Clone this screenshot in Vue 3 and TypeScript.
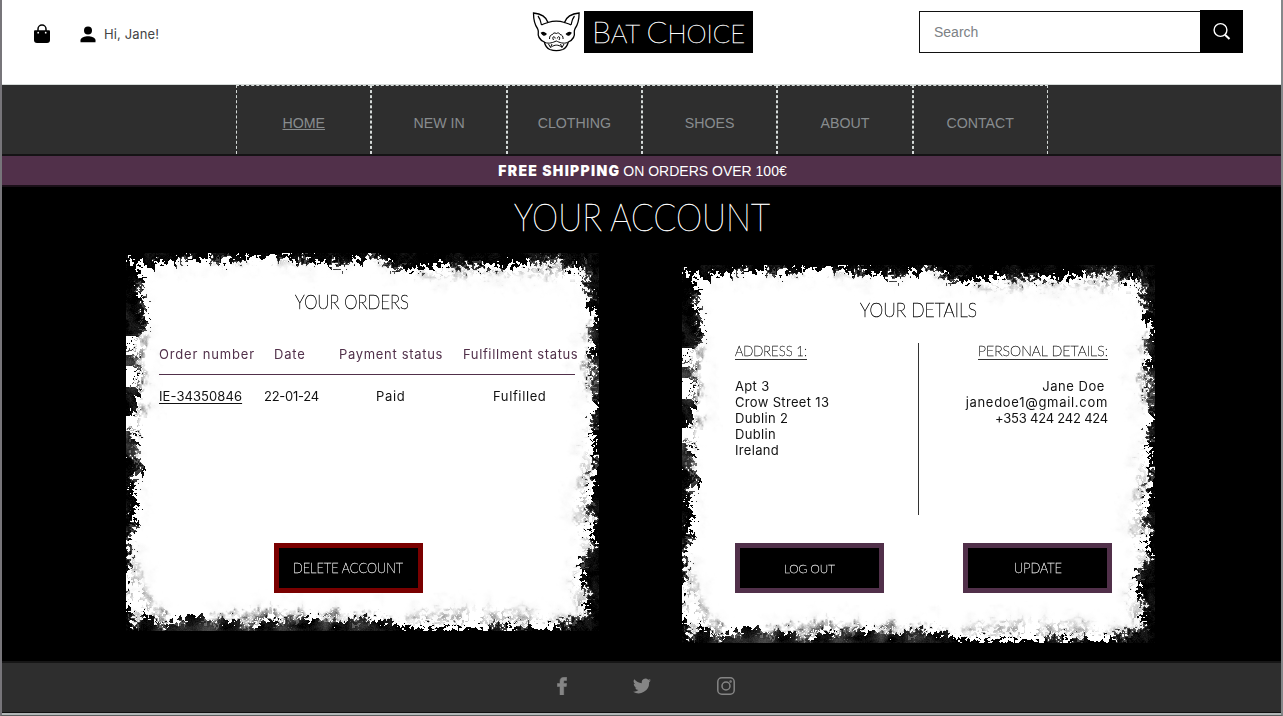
<script setup lang="ts">
import { onMounted, ref } from 'vue'

const links = ['HOME', 'NEW IN', 'CLOTHING', 'SHOES', 'ABOUT', 'CONTACT']
const address = ['Apt 3', 'Crow Street 13', 'Dublin 2', 'Dublin', 'Ireland']

const ordersPaper = ref<HTMLCanvasElement | null>(null)
const detailsPaper = ref<HTMLCanvasElement | null>(null)

const W = 473
const H = 378

// Depth of the ink along each side of the paper, as [position, depth] stops.
type Profile = [number, number][]
const topInk: Profile = [[0, 3], [10, 11], [20, 15], [27, 11], [40, 8], [60, 8], [85, 7], [110, 6], [135, 4], [160, 4], [172, 8], [200, 11], [215, 12], [228, 6], [248, 5], [258, 8], [270, 18], [285, 16], [300, 14], [318, 14], [330, 12], [345, 15], [375, 14], [390, 12], [405, 9], [432, 7], [442, 17], [450, 14], [458, 13], [466, 24], [473, 30]]
const rightInk: Profile = [[0, 24], [12, 11], [30, 13], [45, 8], [54, 11], [62, 2], [75, 8], [92, 9], [110, 8], [140, 6], [155, 4], [165, 8], [180, 5], [195, 7], [212, 6], [238, 7], [256, 9], [265, 3], [273, 9], [285, 9], [294, 4], [303, 15], [318, 17], [330, 18], [340, 10], [352, 12], [362, 7], [370, 20], [378, 30]]
const bottomInk: Profile = [[0, 12], [8, 8], [12, 6], [17, 17], [26, 13], [36, 3], [45, 10], [62, 14], [76, 15], [86, 8], [110, 9], [120, 4], [130, 8], [142, 10], [160, 11], [180, 11], [195, 14], [210, 9], [240, 13], [258, 10], [268, 7], [276, 3], [300, 1], [315, 3], [345, 3], [360, 1], [370, 5], [400, 3], [412, 1], [425, 5], [440, 8], [450, 11], [460, 14], [473, 22]]
const leftInk: Profile = [[0, 1], [8, 4], [16, 14], [25, 18], [35, 13], [47, 17], [58, 19], [70, 19], [80, 17], [86, 8], [100, 8], [112, 13], [130, 9], [148, 13], [160, 7], [168, 2], [176, 5], [190, 12], [203, 8], [212, 15], [218, 16], [224, 8], [236, 7], [250, 10], [265, 10], [275, 7], [286, 2], [300, 3], [312, 1], [345, -2], [358, 5], [378, 10]]
// Depth of the smoky shading just inside the ink.
const leftSmoke: Profile = [[0, 20], [30, 16], [70, 19], [90, 21], [150, 20], [185, 18], [200, 10], [300, 8], [325, 17], [345, 28], [365, 20], [378, 12]]
const rightSmoke: Profile = [[0, 22], [60, 9], [80, 15], [115, 18], [140, 12], [165, 10], [220, 20], [255, 26], [290, 20], [320, 26], [350, 26], [378, 20]]
const bottomSmoke: Profile = [[0, 12], [15, 25], [35, 27], [50, 10], [90, 17], [145, 25], [190, 18], [255, 20], [270, 10], [290, 20], [345, 23], [390, 22], [430, 16], [473, 20]]
const topSmoke: Profile = [[0, 14], [25, 16], [45, 10], [130, 13], [180, 14], [240, 8], [280, 22], [330, 26], [400, 24], [440, 29], [473, 30]]

function at(p: Profile, v: number): number {
  for (let i = 1; i < p.length; i++) {
    if (v <= p[i][0]) {
      const t = (v - p[i - 1][0]) / (p[i][0] - p[i - 1][0])
      return p[i - 1][1] + t * (p[i][1] - p[i - 1][1])
    }
  }
  return p[p.length - 1][1]
}

function hash(x: number, y: number, seed: number): number {
  let h = Math.imul(x, 374761393) + Math.imul(y, 668265263) + Math.imul(seed, 982451653)
  h = Math.imul(h ^ (h >>> 13), 1274126177)
  return ((h ^ (h >>> 16)) >>> 0) / 4294967295
}

function noise(x: number, y: number, size: number, seed: number): number {
  const gx = x / size
  const gy = y / size
  const ix = Math.floor(gx)
  const iy = Math.floor(gy)
  const fx = gx - ix
  const fy = gy - iy
  const a = hash(ix, iy, seed) * (1 - fx) + hash(ix + 1, iy, seed) * fx
  const b = hash(ix, iy + 1, seed) * (1 - fx) + hash(ix + 1, iy + 1, seed) * fx
  return a * (1 - fy) + b * fy - 0.5
}

function drawPaper(canvas: HTMLCanvasElement | null) {
  const ctx = canvas?.getContext('2d')
  if (!ctx) return
  const img = ctx.createImageData(W, H)
  for (let y = 0; y < H; y++) {
    for (let x = 0; x < W; x++) {
      const r = W - 1 - x
      const b = H - 1 - y
      const ink = Math.max(at(topInk, x) - y, at(rightInk, y) - r, at(bottomInk, x) - b, at(leftInk, y) - x)
      let shade = 255
      if (ink > -40) {
        const grain = hash(x, y, 9) - 0.5
        const fine = noise(x, y, 2, 1)
        const mid = noise(x, y, 4, 2)
        const broad = noise(x, y, 11, 3)
        const edge = ink + grain * 3 + fine * 12 + mid * 9 + broad * 3
        const smoke = Math.max(at(topSmoke, x) - y, at(rightSmoke, y) - r, at(bottomSmoke, x) - b, at(leftSmoke, y) - x)
        const haze = smoke + fine * 6 + mid * 9 + broad * 10
        const left = x < 24 && y > 80 && y < 205
        const low = b < 24 && x > 20 && x < 270
        const side = r < 24 && y > 60 && y < 140
        const smoky = left || low || side
        if (edge > 0) {
          shade = Math.max(0, (smoky ? 28 : 4) + broad * (smoky ? 85 : 36) + mid * 30 + grain * 18)
          if (edge < 4 && broad > 0) shade += 55
        } else if (haze > 0 && edge < -1 && fine + broad * 0.8 > (smoky ? -0.22 : -0.02)) {
          const depth = smoky ? 17 : 8
          shade = 250 - Math.min(haze, 13) * depth * Math.max(0, 0.5 + mid * 0.7 + grain * 0.25)
        } else if (haze > -14) {
          shade = 255 - Math.max(0, broad + mid * 0.5 + 0.2 + grain * 0.15) * (haze + 14) * 0.9
        }
        // Torn white patches on the outer left side.
        const patch = (y > 82 && y < 102) || (y > 112 && y < 134) || (y > 162 && y < 178)
        if (x < 11 && patch && fine * 0.8 + mid + (8 - x) * 0.04 > -0.05) shade = 255
      }
      const i = (y * W + x) * 4
      const v = Math.max(0, Math.min(255, shade))
      img.data[i] = img.data[i + 1] = img.data[i + 2] = v
      img.data[i + 3] = 255
    }
  }
  ctx.putImageData(img, 0, 0)
}

onMounted(() => {
  drawPaper(ordersPaper.value)
  drawPaper(detailsPaper.value)
})
</script>

<template>
  <div class="page">
    <header class="top">
      <div class="user">
        <svg class="bag" width="18" height="20" viewBox="0 0 18 20">
          <path d="M5 7V5a4 4 0 0 1 8 0v2" fill="none" stroke="#000" stroke-width="1.5" />
          <path d="M2 6.3h14q1 0 1 1V16q0 3-3 3H4q-3 0-3-3V7.300q0-1 1-1z" />
          <circle cx="5.200" cy="8.700" r=".9" fill="#fff" /><circle cx="12.700" cy="8.700" r=".9" fill="#fff" />
        </svg>
        <svg class="person" width="16" height="17" viewBox="0 0 16 17">
          <circle cx="8" cy="4.500" r="4" /><path d="M0.500 16.300v-2.100c0-2.700 4.500-4 7.500-4s7.500 1.300 7.500 4v2.100z" />
        </svg>
        <span class="hello">Hi, Jane!</span>
      </div>
      <div class="brand">
        <svg class="bat" width="52" height="42" viewBox="1 0.500 52 42" fill="none" stroke="#000" stroke-width="1.300">
          <path d="M17 12C15 6 9 3 2.500 2.500c0 6 .8 11 4 15.500 .8 1.800.7 2 .8 3 -.8 5 1.500 8.500 6 10.500 1 4 3 6.500 5.500 7.500 4 1.400 9 1.400 13 0 2.500-1 4.500-3.500 5.500-7.500 4.500-2 6.800-5.500 6-10.500 0-1 0-1.200.8-3 3.200-4.500 4-9.500 4-15.500C41.500 3 35.500 6 33.500 12c-5-1.600-11.500-1.600-16.500 0z" />
          <path d="M10.500 14.500c-.5-3.500-1-6-3.500-9M17 12l-4.500 1.500-2 1M40 14.500c.5-3.500 1-6 3.500-9M33.500 12l4.500 1.500 2 1" stroke-width="1.200" />
          <path d="M18.500 28.500c0-3 1-4 3-4.500.8-1.700 2-2 3.800-1 1.800-1 3-.7 3.800 1 2 .5 3 1.500 3 4.500M22.500 29.500c-2-3 1-5 1.700-1.500M28 29.500c2-3-1-5-1.700-1.500M14 32c4 1.500 8 0 11.300-1.500C28.500 32 32.500 33.500 36.500 32M17.500 33.500l2 3.500 1.500-3.500M33 33.500l-2 3.500-1.500-3.500M20.500 36.500c3-2.500 7-2.500 10 0" stroke-width="1" />
          <path d="M10.500 22.500q2-1.500 4.500 1-2.500 2.500-4.500-1zM40 22.500q-2-1.500-4.500 1 2.500 2.500 4.500-1z" fill="#000" />
        </svg>
        <div class="wordmark">
          <svg width="169" height="42"><text class="thin light" x="8" y="32" textLength="153" lengthAdjust="spacingAndGlyphs"><tspan font-size="30">B</tspan><tspan font-size="25">AT </tspan><tspan font-size="30">C</tspan><tspan font-size="25">HOICE</tspan></text></svg>
        </div>
      </div>
      <div class="search">
        <div class="field">Search</div>
        <div class="go">
          <svg width="20" height="20" viewBox="0 0 20 20" fill="none" stroke="#fff"><circle cx="8.500" cy="8" r="6.400" stroke-width="1.400" /><path d="M13 12.800l4.500 4.200" stroke-width="2" /></svg>
        </div>
      </div>
    </header>

    <nav class="nav">
      <a v-for="(link, i) in links" :key="link" :class="{ active: i === 0 }">{{ link }}</a>
    </nav>

    <div class="shipping"><b>FREE SHIPPING</b><span>ON ORDERS OVER 100€</span></div>

    <main class="main">
      <svg class="title" width="260" height="40"><text class="thin light" x="2" y="32" font-size="38" textLength="256" lengthAdjust="spacingAndGlyphs">YOUR ACCOUNT</text></svg>
      <div class="panels">
        <section class="paper">
          <canvas ref="ordersPaper" width="473" height="378"></canvas>
          <div class="content orders">
            <svg class="heading" width="118" height="24"><text class="thin ink" x="1" y="18" font-size="19.500" textLength="114" lengthAdjust="spacingAndGlyphs">YOUR ORDERS</text></svg>
            <div class="row head">
              <span class="c1">Order number</span><span class="c2">Date</span><span class="c3">Payment status</span><span class="c4">Fulfillment status</span>
            </div>
            <div class="rule"></div>
            <div class="row">
              <span class="c1 id"><u>IE-34350846</u></span><span class="c2 date">22-01-24</span><span class="c3 paid">Paid</span><span class="c4 done">Fulfilled</span>
            </div>
            <div class="button danger">
              <svg width="112" height="20"><text class="thin light small" x="0" y="15" font-size="14" textLength="110" lengthAdjust="spacingAndGlyphs">DELETE ACCOUNT</text></svg>
            </div>
          </div>
        </section>

        <section class="paper second">
          <canvas ref="detailsPaper" width="473" height="378"></canvas>
          <div class="content details">
            <svg class="heading" width="118" height="24"><text class="thin ink" x="0" y="18" font-size="19.500" textLength="117" lengthAdjust="spacingAndGlyphs">YOUR DETAILS</text></svg>
            <div class="columns">
              <div class="col">
                <svg class="sub" width="72" height="18"><text class="thin ink small" x="0" y="13" font-size="14" textLength="72" lengthAdjust="spacingAndGlyphs">ADDRESS 1:</text></svg>
                <p v-for="line in address" :key="line">{{ line }}</p>
              </div>
              <div class="divider"></div>
              <div class="col right">
                <svg class="sub" width="130" height="18"><text class="thin ink small" x="0" y="13" font-size="14" textLength="130" lengthAdjust="spacingAndGlyphs">PERSONAL DETAILS:</text></svg>
                <p class="name">Jane Doe</p>
                <p class="mail">janedoe1@gmail.com</p>
                <p class="phone">+353 424 242 424</p>
              </div>
            </div>
            <div class="buttons">
              <div class="button"><svg width="52" height="20"><text class="thin light small" x="0" y="14.500" font-size="12" textLength="51" lengthAdjust="spacingAndGlyphs">LOG OUT</text></svg></div>
              <div class="button"><svg width="50" height="20"><text class="thin light small" x="1" y="15" font-size="14" textLength="48" lengthAdjust="spacingAndGlyphs">UPDATE</text></svg></div>
            </div>
          </div>
        </section>
      </div>
    </main>

    <footer class="footer">
      <svg width="10" height="18" viewBox="0 0 10 18"><path d="M3 18V9.500H.3v-3H3V4.300C3 1.500 4.600.2 7 .2h2.700v3.200H8c-1 0-1.300.5-1.300 1.300v1.800h3l-.4 3H6.700V18z" fill="#858585" stroke="#858585" stroke-width=".5" /></svg>
      <svg width="18" height="16" viewBox="0 0 24 20"><path d="M24 2.400a10 10 0 0 1-2.800.8A5 5 0 0 0 23.300.5a10 10 0 0 1-3.100 1.200 4.900 4.900 0 0 0-8.400 4.500A14 14 0 0 1 1.700 1a4.900 4.900 0 0 0 1.500 6.600 5 5 0 0 1-2.200-.6 4.900 4.900 0 0 0 4 4.900 5 5 0 0 1-2.300.1 4.900 4.900 0 0 0 4.600 3.400A10 10 0 0 1 0 17.500 14 14 0 0 0 21.500 5 10 10 0 0 0 24 2.400z" fill="#858585" /></svg>
      <svg width="18" height="18" viewBox="0 0 18 18" fill="none" stroke="#858585" stroke-width="1.500"><rect x=".8" y=".8" width="16.400" height="16.400" rx="4" /><circle cx="9" cy="9" r="4" /><circle cx="13.600" cy="4.400" r=".5" /></svg>
    </footer>
    <div class="edge"></div>
  </div>
</template>

<style>
body { margin: 0; overflow: hidden; background: #000; }
</style>

<style scoped>
* { box-sizing: border-box; }
.page {
  width: 1283px; height: 716px; display: flex; flex-direction: column;
  border-left: 2px solid #77757a; border-right: 2px solid #85888a; border-bottom: 1px solid #5c6060;
  font-family: "Liberation Sans", Arial, sans-serif; background: #000;
}
svg { display: block; flex: none; }
.thin { font-family: Lato, Inter, sans-serif; font-weight: 100; stroke-width: .5px; }
.small { stroke-width: .35px; }
.ink { fill: #000; stroke: #000; }
.light { fill: #fff; stroke: #fff; }

.top { height: 84px; flex: none; background: #fff; display: flex; justify-content: space-between; align-items: flex-start; }
.user { width: 529px; display: flex; padding: 24px 0 0 31px; }
.person { margin: 2px 0 0 29px; }
.hello { margin: 2px 0 0 8px; font: 400 13px/17px Inter, sans-serif; color: #444; letter-spacing: .12px; }
.brand { display: flex; padding-top: 11px; width: 387px; }
.wordmark { background: #000; width: 169px; height: 42px; margin-left: 0; }
.search { display: flex; width: 362px; padding-top: 10px; }
.field { width: 281px; height: 42px; margin-top: 1px; border: 1px solid #111; border-right: 0; padding: 0 14px; font-size: 14px; line-height: 40px; color: #7c8185; }
.go { width: 43px; height: 43px; background: #000; padding: 12px 0 0 12px; }

.nav { height: 72px; flex: none; background: #2e2e2e; border-top: 1px solid #d5dad8; border-bottom: 2px solid #151315; display: flex; justify-content: center; padding-left: 1px; }
.nav a { width: 135.300px; border: 1px dashed #d5dad8; border-bottom: 0; text-align: center; font-size: 14.200px; line-height: 74px; color: #888c8e; }
.nav .active { text-decoration: underline; }

.shipping { height: 31px; flex: none; background: #51304a; border-bottom: 2px solid #1a0f18; color: #fff; display: flex; justify-content: center; font-size: 14px; line-height: 31px; padding-left: 2px; }
.shipping b { font-family: Inter, sans-serif; font-weight: 900; font-size: 14px; letter-spacing: 1.3px; margin-right: 3px; line-height: 30px; }

.main { flex: 1; display: flex; flex-direction: column; align-items: center; background: #000; }
.title { margin-top: 12px; margin-right: 0; }
.panels { display: flex; gap: 83px; align-items: flex-start; margin-top: 14px; margin-right: 2px; }
.paper { display: grid; width: 473px; height: 378px; }
.paper > * { grid-area: 1 / 1; }
.second { margin-top: 12px; }
canvas { display: block; }
.content { position: relative; font: 400 13px/16px Inter, sans-serif; color: #111; }
.orders { padding: 38px 18px 0 33px; }
.orders .heading { margin-left: 135px; }
.row { display: flex; white-space: nowrap; }
.head { margin-top: 31px; color: #51304a; }
.c1 { width: 115px; letter-spacing: .83px; }
.c2 { width: 65px; letter-spacing: .8px; }
.c3 { width: 124px; letter-spacing: .68px; }
.c4 { width: 118px; letter-spacing: .62px; }
.id { letter-spacing: .08px; }
.date { width: 112px; margin-left: -10px; letter-spacing: -.25px; }
.paid { width: 117px; }
.rule { height: 1px; width: 416px; margin: 12px 0 13px; background: #51304a; }
u { text-underline-offset: 2px; }
.button { width: 149px; height: 50px; border: 5px solid #51304a; background: #000; display: flex; align-items: center; justify-content: center; }
.danger { border-color: #7a0000; margin: 139px 0 0 115px; }

.details { padding: 34px 43px 0 53px; }
.details .heading { margin-left: 125px; }
.columns { display: flex; justify-content: space-between; margin-top: 20px; padding-right: 4px; height: 172px; }
.divider { width: 1px; background: #333; margin-right: 6px; }
.col { width: 150px; }
.col p { margin: 0; letter-spacing: .33px; white-space: nowrap; }
.sub { border-bottom: 1px solid #333; margin-bottom: 18px; height: 17px; }
.right { display: flex; flex-direction: column; align-items: flex-end; }
.right .name { margin-right: 3px; letter-spacing: .55px; }
.right .mail { letter-spacing: .7px; }
.right .phone { letter-spacing: -.22px; }
.buttons { display: flex; justify-content: space-between; margin-top: 28px; width: 377px; }

.footer { height: 52px; flex: none; background: #2e2e2e; border-top: 2px solid #161616; border-bottom: 1px solid #111; display: flex; justify-content: center; align-items: center; gap: 66px; padding: 0 0 3px 9px; }
.edge { height: 2px; flex: none; background: #b2b7b7; }
</style>
